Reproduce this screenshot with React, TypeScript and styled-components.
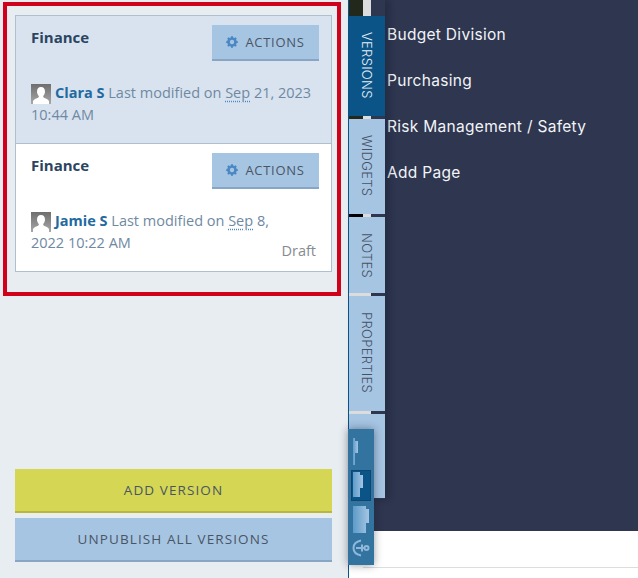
import { createGlobalStyle } from 'styled-components';
import styled from 'styled-components';
import { BsGearFill } from 'react-icons/bs';

const GlobalStyle = createGlobalStyle`
  html, body { margin: 0; padding: 0; height: 100%; background: #fff; overflow: hidden; }
  body { font-family: "Open Sans", sans-serif; }
`;

const Page = styled.div`
  display: flex;
  width: 638px;
  height: 578px;
  overflow: hidden;
`;

const Sidebar = styled.aside`
  flex: 0 0 348px;
  box-sizing: border-box;
  display: flex;
  flex-direction: column;
  background: #e8edf2;
  padding: 2px 0 16px 3px;
`;

const Highlight = styled.div`
  box-sizing: border-box;
  width: 338px;
  height: 294px;
  border: 4px solid #d0021b;
  padding: 9px 5px 9px 8px;
`;

const VersionList = styled.div`
  border: 1px solid #b0bfd0;
  display: flex;
  flex-direction: column;
`;

const Version = styled.div<{ $current?: boolean }>`
  box-sizing: border-box;
  height: ${p => (p.$current ? '128px' : '127px')};
  padding: 9px 12px 0 15px;
  background: ${p => (p.$current ? '#d9e3ef' : '#fff')};
  border-bottom: ${p => (p.$current ? '1px solid #b0bfd0' : 'none')};
  position: relative;
`;

const VersionHead = styled.div`
  display: flex;
  justify-content: space-between;
  align-items: flex-start;
  height: 50px;
`;

const VersionName = styled.div`
  font-size: 15px;
  font-weight: 700;
  color: #2a4561;
  line-height: 25px;
`;

const ActionButton = styled.button`
  box-sizing: border-box;
  width: 107px;
  height: 36px;
  border: 0;
  border-bottom: 2px solid #88a5c4;
  background: #a6c5e3;
  color: #4a5563;
  font: 400 13px "Open Sans", sans-serif;
  letter-spacing: 0.7px;
  display: flex;
  align-items: center;
  justify-content: center;
  gap: 7px;
  padding: 0;

  svg { color: #4a88c4; width: 12px; height: 12px; }
`;

const Meta = styled.div`
  font-size: 14.5px;
  line-height: 22px;
  color: #6f89a3;
  margin-top: 7px;
`;

const Avatar = styled.svg`
  width: 20px;
  height: 20px;
  vertical-align: -6px;
  margin-right: 4px;
`;

const Author = styled.a`
  color: #226a9f;
  font-weight: 700;
`;

const DateText = styled.abbr`
  text-decoration: underline dotted #4a88c4;
  text-underline-offset: 3px;
`;

const Status = styled.span`
  position: absolute;
  right: 15px;
  bottom: 11px;
  font-size: 14.5px;
  color: #858b91;
`;

const Footer = styled.div`
  margin-top: auto;
  margin-left: 12px;
  width: 317px;
  display: flex;
  flex-direction: column;
  gap: 5px;
`;

const WideButton = styled.button<{ $accent?: boolean }>`
  box-sizing: border-box;
  height: 44px;
  border: 0;
  border-bottom: 2px solid ${p => (p.$accent ? '#b9b83d' : '#88a5c4')};
  background: ${p => (p.$accent ? '#d4d654' : '#a6c5e3')};
  color: #4a5563;
  font: 400 13.5px "Open Sans", sans-serif;
  letter-spacing: 1.1px;
  padding: 0;
`;

const Canvas = styled.main`
  flex: 1;
  border-left: 1px solid #0b5488;
  display: flex;
  flex-direction: column;
  position: relative;
  min-width: 0;
`;

const Workspace = styled.div`
  display: flex;
  height: 531px;
  background: #2e3650;
`;

const Rail = styled.nav`
  flex: 0 0 36px;
  display: flex;
  flex-direction: column;
  gap: 3px;
  padding-top: 16px;
  height: 499px;
  box-sizing: border-box;
  background:
    linear-gradient(180deg, #22281c 0 190px, #000 190px 230px, #dcdcdc 230px) left top / 14px 100% no-repeat,
    linear-gradient(90deg, #dcdcdc 0 22px, #2e3650 22px);
  box-shadow: 4px 0 6px rgba(20, 25, 40, 0.35);
  z-index: 1;
`;

const Tab = styled.div<{ $active?: boolean; $height: number }>`
  height: ${p => p.$height}px;
  box-sizing: border-box;
  background: ${p => (p.$active ? '#0b5488' : '#a6c5e3')};
  color: ${p => (p.$active ? '#e8eff6' : '#465263')};
  writing-mode: vertical-rl;
  font: 300 13px "Inter", sans-serif;
  letter-spacing: 0.3px;
  text-transform: uppercase;
  line-height: 36px;
  padding-top: 16px;
`;

const PageLinks = styled.ul`
  list-style: none;
  margin: 0;
  padding: 23px 0 0 2px;
  display: flex;
  flex-direction: column;
  gap: 23px;
`;

const PageLink = styled.li`
  font: 400 15.5px/23px "Inter", sans-serif;
  letter-spacing: 0.3px;
  color: #f2f4f7;
`;

const Toolbar = styled.div`
  position: absolute;
  left: -1px;
  top: 429px;
  width: 26px;
  height: 136px;
  background: #33739f;
  box-shadow: 0 0 8px rgba(20, 25, 40, 0.45);
  z-index: 2;
  display: flex;
  flex-direction: column;
  align-items: flex-start;
`;

const ToolIcon = styled.svg<{ $selected?: boolean; $top: number }>`
  display: block;
  flex: none;
  margin: ${p => p.$top}px 0 0 4px;
  background: ${p => (p.$selected ? '#0b5488' : 'transparent')};
  outline: ${p => (p.$selected ? '1px solid #0e4670' : 'none')};
`;

const BottomRule = styled.div`
  margin: 36px 0 0 14px;
  height: 1px;
  background: #ddd;
`;

const Silhouette = () => (
  <Avatar viewBox="0 0 20 20">
    <defs>
      <linearGradient id="avatar-bg" x1="0" y1="0" x2="0" y2="1">
        <stop offset="0" stopColor="#6e6e6e" />
        <stop offset="1" stopColor="#a8a8a8" />
      </linearGradient>
    </defs>
    <rect width="20" height="20" fill="url(#avatar-bg)" />
    <path d="M10 3c2.600 0 4 2 4 4.500 0 2-1 3.500-1.800 4.500-.2 1 .3 1.600 1.800 2.200 2 .7 3.500 1.500 4 3V20H2v-2.800c.5-1.500 2-2.300 4-3 1.500-.6 2-1.200 1.800-2.200C7 11 6 9.500 6 7.500 6 5 7.400 3 10 3z" fill="#fff" />
  </Avatar>
);

const gradientStops = (id: string) => (
  <defs>
    <linearGradient id={id} x1="0" y1="0" x2="1" y2="0">
      <stop offset="0" stopColor="#5d9bc8" />
      <stop offset="1" stopColor="#a6c5e3" />
    </linearGradient>
  </defs>
);

export default function App() {
  return (
    <>
      <GlobalStyle />
      <Page>
        <Sidebar>
          <Highlight>
            <VersionList>
              <Version $current>
                <VersionHead>
                  <VersionName>Finance</VersionName>
                  <ActionButton><BsGearFill />ACTIONS</ActionButton>
                </VersionHead>
                <Meta>
                  <Silhouette />
                  <Author>Clara S</Author> Last modified on <DateText>Sep</DateText> 21, 2023 10:44 AM
                </Meta>
              </Version>
              <Version>
                <VersionHead>
                  <VersionName>Finance</VersionName>
                  <ActionButton><BsGearFill />ACTIONS</ActionButton>
                </VersionHead>
                <Meta>
                  <Silhouette />
                  <Author>Jamie S</Author> Last modified on <DateText>Sep</DateText> 8,<br />2022 10:22 AM
                </Meta>
                <Status>Draft</Status>
              </Version>
            </VersionList>
          </Highlight>
          <Footer>
            <WideButton $accent>ADD VERSION</WideButton>
            <WideButton>UNPUBLISH ALL VERSIONS</WideButton>
          </Footer>
        </Sidebar>
        <Canvas>
          <Workspace>
            <Rail>
              <Tab $active $height={100}>Versions</Tab>
              <Tab $height={95}>Widgets</Tab>
              <Tab $height={76}>Notes</Tab>
              <Tab $height={115}>Properties</Tab>
              <Tab $height={84} />
            </Rail>
            <PageLinks>
              <PageLink>Budget Division</PageLink>
              <PageLink>Purchasing</PageLink>
              <PageLink>Risk Management / Safety</PageLink>
              <PageLink>Add Page</PageLink>
            </PageLinks>
          </Workspace>
          <BottomRule />
          <Toolbar>
            <ToolIcon $top={9} width="18" height="27" viewBox="0 0 18 27">
              {gradientStops('tool-a')}
              <path d="M1 0h2v3h3v12H3v12H1z" fill="url(#tool-a)" />
            </ToolIcon>
            <ToolIcon $selected $top={6} width="18" height="29" viewBox="0 0 18 29">
              {gradientStops('tool-b')}
              <path d="M1 1h7v3h3v13H8v9H1z" fill="url(#tool-b)" />
            </ToolIcon>
            <ToolIcon $top={6} width="18" height="27" viewBox="0 0 18 27">
              {gradientStops('tool-c')}
              <path d="M1 0h13v3h3v14h-3v10H1z" fill="url(#tool-c)" />
            </ToolIcon>
            <ToolIcon $top={6} width="18" height="18" viewBox="0 0 18 18">
              <g fill="none" stroke="#8fb8da" strokeWidth="2">
                <path d="M9 1.500C4 2.500 1.500 5.500 1.500 9S4 15.500 9 16.500" />
                <path d="M4 9h9M10 5.500v7" />
                <circle cx="14.500" cy="9" r="2" />
              </g>
            </ToolIcon>
          </Toolbar>
        </Canvas>
      </Page>
    </>
  );
}
